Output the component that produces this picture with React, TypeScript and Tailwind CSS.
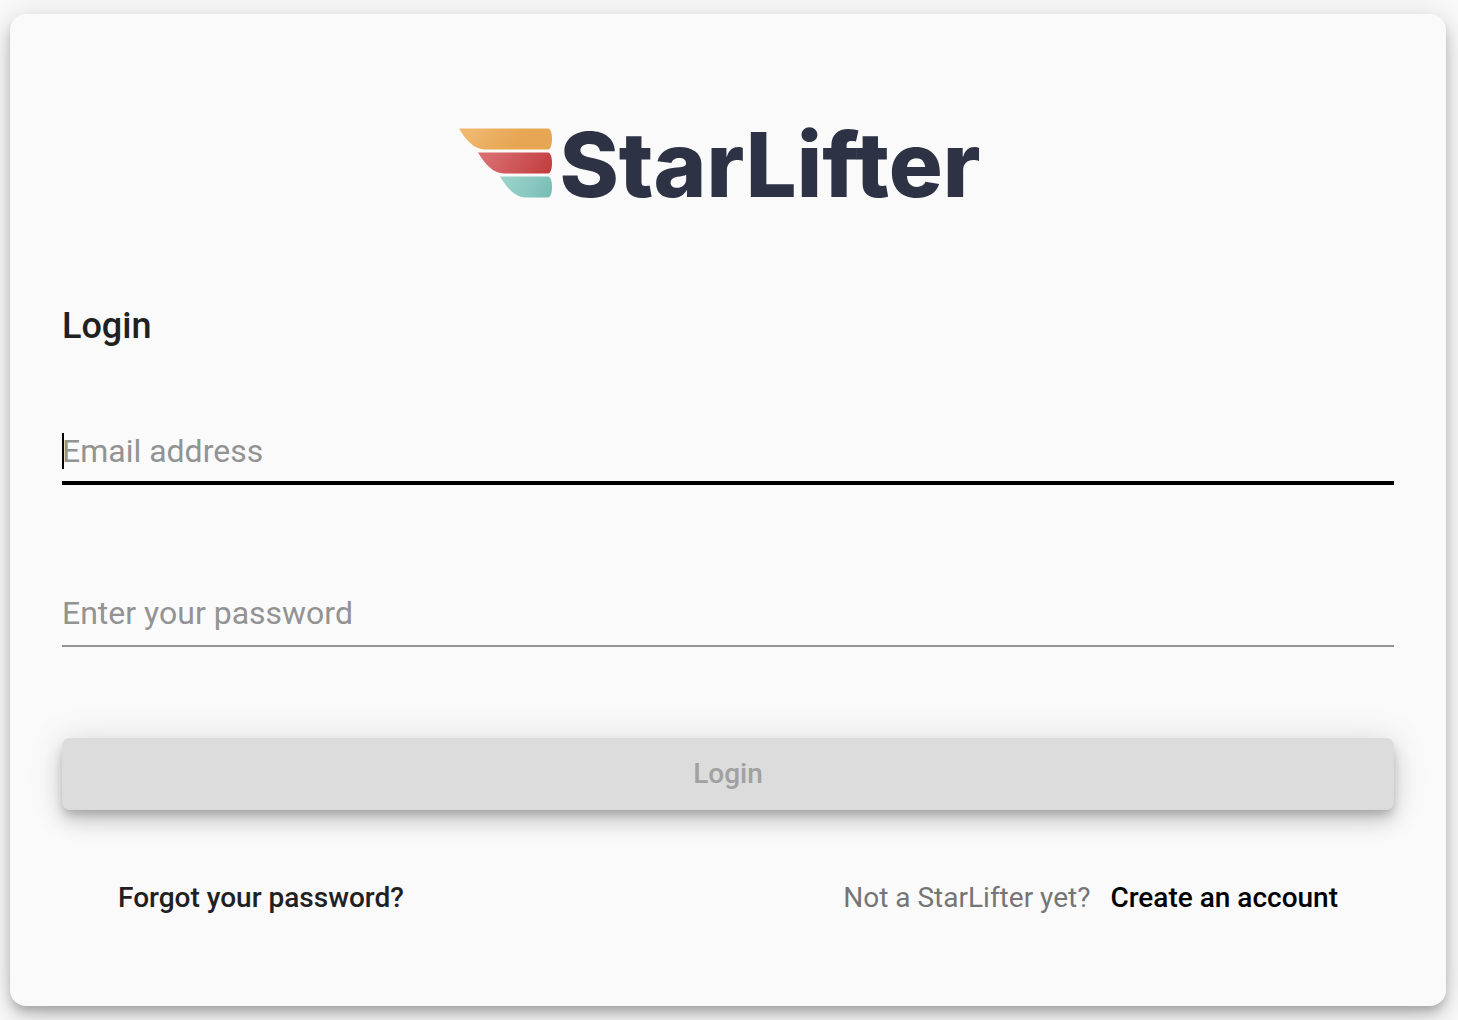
import React from 'react';

function Logo() {
  return (
    <div role="img" aria-label="StarLifter" className="flex h-[90px] items-center justify-center pr-4">
      <svg width="94" height="72" viewBox="0 0 94 72" className="mr-1.5 shrink-0" aria-hidden="true">
        <defs>
          <linearGradient id="gold" x1="0" x2="1" y1="0.3" y2="0.5">
            <stop offset="0.1" stopColor="#f0b76f" />
            <stop offset="0.65" stopColor="#e6a653" />
          </linearGradient>
          <linearGradient id="red" x1="0" x2="1" y1="0.3" y2="0.5">
            <stop offset="0.1" stopColor="#d86d70" />
            <stop offset="1" stopColor="#c34040" />
          </linearGradient>
          <linearGradient id="teal" x1="0" x2="1" y1="0.3" y2="0.5">
            <stop offset="0.1" stopColor="#9ad2ca" />
            <stop offset="1" stopColor="#7abfb6" />
          </linearGradient>
        </defs>
        <path d="M0 1.500H89C91.500 1.500 93 6 93 12S91.500 22.500 89 22.500H26C15 22.500 7 13 0 1.500Z" fill="url(#gold)" />
        <path d="M19 25.500H89C91.500 25.500 93 30 93 36S91.500 46.500 89 46.500H45C34 46.500 26 37 19 25.500Z" fill="url(#red)" />
        <path d="M41 49.500H89C91.500 49.500 93 54 93 60S91.500 70.500 89 70.500H67C56 70.500 48 61 41 49.500Z" fill="url(#teal)" />
      </svg>
      <span className="pt-1 font-['Inter',sans-serif] text-[90px] leading-[90px] font-extrabold text-[#2d3245]">StarLifter</span>
    </div>
  );
}

export default function App() {
  return (
    <main className="flex min-h-screen bg-[#fafafa] py-3.5 pr-3 pl-2.5 font-['Roboto',sans-serif] text-[#212121]">
      <form
        onSubmit={(e) => e.preventDefault()}
        className="flex-1 rounded-2xl bg-[#fafafa] px-[52px] pt-[104px] pb-20 shadow-[0_6px_10px_-2px_rgba(0,0,0,0.2),0_12px_20px_0_rgba(0,0,0,0.14),0_2px_36px_0_rgba(0,0,0,0.12)]"
      >
        <Logo />
        <h1 className="mt-[94px] text-4xl leading-12 font-medium">Login</h1>

        <div className="relative mt-[74px]">
          <input
            type="email"
            aria-label="Email address"
            placeholder="Email address"
            className="block h-[61px] w-full border-b-4 border-black bg-transparent pb-1 text-[32px] text-black outline-none placeholder:text-[#939393]"
          />
          <span aria-hidden="true" className="absolute top-[9px] left-0 h-9 w-0.5 bg-black" />
        </div>

        <input
          type="password"
          aria-label="Enter your password"
          placeholder="Enter your password"
          className="mt-[102px] block h-[60px] w-full border-b-2 border-[#949494] bg-transparent pb-1.5 text-[32px] text-black outline-none placeholder:text-[#939393]"
        />

        <button
          type="submit"
          disabled
          className="mt-[91px] block h-[72px] w-full rounded-lg bg-[#dcdcdc] text-[28px] font-medium text-[#a1a1a1] shadow-[0_6px_10px_-2px_rgba(0,0,0,0.2),0_12px_20px_0_rgba(0,0,0,0.14),0_2px_36px_0_rgba(0,0,0,0.12)]"
        >
          Login
        </button>

        <div className="mt-[68px] flex flex-wrap items-center justify-between px-14 text-[28px] leading-10">
          <a href="#forgot" className="font-medium">Forgot your password?</a>
          <p className="flex gap-5 text-[#757575]">
            Not a StarLifter yet?
            <a href="#create" className="font-medium text-black">Create an account</a>
          </p>
        </div>
      </form>
    </main>
  );
}
